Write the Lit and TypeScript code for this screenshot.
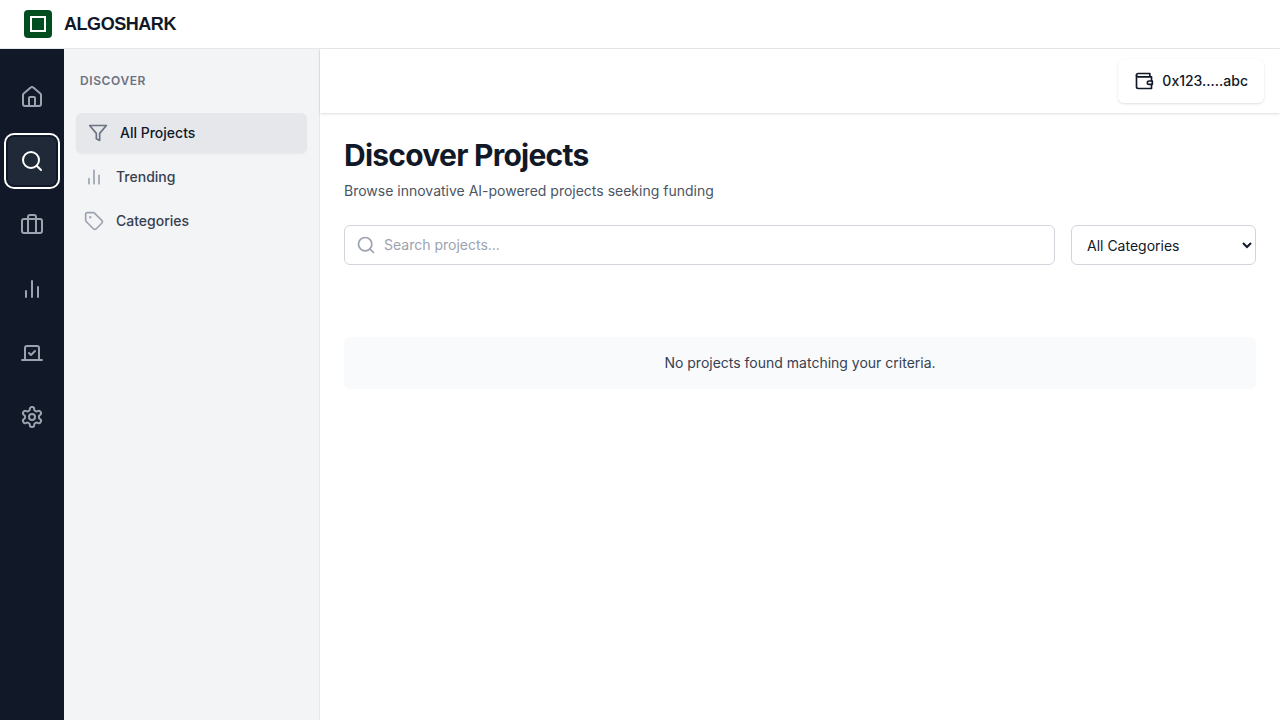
import { LitElement, html, css, svg } from "lit";
import { customElement, state } from "lit/decorators.js";

const icons = {
  home: svg`<path d="M15 21v-8a1 1 0 0 0-1-1h-4a1 1 0 0 0-1 1v8"/><path d="M3 10a2 2 0 0 1 .709-1.528l7-5.999a2 2 0 0 1 2.582 0l7 5.999A2 2 0 0 1 21 10v9a2 2 0 0 1-2 2H5a2 2 0 0 1-2-2z"/>`,
  search: svg`<circle cx="11" cy="11" r="8"/><path d="m21 21-4.3-4.3"/>`,
  portfolio: svg`<path d="M16 20V4a2 2 0 0 0-2-2h-4a2 2 0 0 0-2 2v16"/><rect width="20" height="14" x="2" y="6" rx="2"/>`,
  chart: svg`<path d="M18 20V10M12 20V4M6 20v-6"/>`,
  vote: svg`<path d="m9 12 2 2 4-4"/><path d="M5 7c0-1.1.9-2 2-2h10a2 2 0 0 1 2 2v12H5V7Z"/><path d="M22 19H2"/>`,
  settings: svg`<path d="M12.22 2h-.44a2 2 0 0 0-2 2v.18a2 2 0 0 1-1 1.73l-.43.25a2 2 0 0 1-2 0l-.15-.08a2 2 0 0 0-2.73.73l-.22.38a2 2 0 0 0 .73 2.73l.15.1a2 2 0 0 1 1 1.72v.51a2 2 0 0 1-1 1.74l-.15.09a2 2 0 0 0-.73 2.73l.22.38a2 2 0 0 0 2.73.73l.15-.08a2 2 0 0 1 2 0l.43.25a2 2 0 0 1 1 1.73V20a2 2 0 0 0 2 2h.44a2 2 0 0 0 2-2v-.18a2 2 0 0 1 1-1.73l.43-.25a2 2 0 0 1 2 0l.15.08a2 2 0 0 0 2.73-.73l.22-.39a2 2 0 0 0-.73-2.73l-.15-.08a2 2 0 0 1-1-1.74v-.5a2 2 0 0 1 1-1.74l.15-.09a2 2 0 0 0 .73-2.73l-.22-.38a2 2 0 0 0-2.73-.73l-.15.08a2 2 0 0 1-2 0l-.43-.25a2 2 0 0 1-1-1.73V4a2 2 0 0 0-2-2z"/><circle cx="12" cy="12" r="3"/>`,
  filter: svg`<path d="M22 3H2l8 9.46V19l4 2v-8.54L22 3z"/>`,
  tag: svg`<path d="M12.586 2.586A2 2 0 0 0 11.172 2H4a2 2 0 0 0-2 2v7.172a2 2 0 0 0 .586 1.414l8.704 8.704a2.426 2.426 0 0 0 3.42 0l6.58-6.58a2.426 2.426 0 0 0 0-3.42z"/><circle cx="7.5" cy="7.5" r=".5" fill="currentColor"/>`,
  wallet: svg`<path d="M21 12V7H5a2 2 0 0 1 0-4h14v4"/><path d="M3 5v14a2 2 0 0 0 2 2h16v-5"/><path d="M18 12a2 2 0 0 0 0 4h4v-4Z"/>`,
};

type IconName = keyof typeof icons;

const icon = (name: IconName) => html`<svg class="icon" viewBox="0 0 24 24" aria-hidden="true">${icons[name]}</svg>`;

const sections: { label: string; icon: IconName }[] = [
  { label: "Home", icon: "home" },
  { label: "Discover", icon: "search" },
  { label: "Portfolio", icon: "portfolio" },
  { label: "Analytics", icon: "chart" },
  { label: "Governance", icon: "vote" },
  { label: "Settings", icon: "settings" },
];

const views: { label: string; icon: IconName }[] = [
  { label: "All Projects", icon: "filter" },
  { label: "Trending", icon: "chart" },
  { label: "Categories", icon: "tag" },
];

@customElement("app-root")
export class AppRoot extends LitElement {
  @state() private section = "Discover";
  @state() private view = "All Projects";

  static styles = css`
    :host {
      display: flex;
      flex-direction: column;
      min-height: 100vh;
      background: #fff;
      color: #111827;
      font: 14px/20px Inter, sans-serif;
    }
    * { box-sizing: border-box; }
    h1, h2, p { margin: 0; }
    button, input, select { font: inherit; color: inherit; }
    button { border: 0; background: none; cursor: pointer; }
    .icon {
      display: block;
      flex: none;
      width: 20px;
      height: 20px;
      fill: none;
      stroke: currentColor;
      stroke-width: 2;
      stroke-linecap: round;
      stroke-linejoin: round;
    }
    .brand-bar {
      display: flex;
      align-items: center;
      gap: 12px;
      padding: 10px 24px;
      border-bottom: 1px solid #e5e7eb;
    }
    .logo {
      display: grid;
      place-items: center;
      width: 28px;
      height: 28px;
      border-radius: 4px;
      background: #004d20;
    }
    .logo-mark { width: 16px; height: 16px; border: 2px solid #fff; }
    .brand {
      font: 700 18px/28px "Liberation Sans", sans-serif;
      letter-spacing: -0.025em;
    }
    .body { display: flex; flex: 1; }
    .rail {
      display: flex;
      flex-direction: column;
      align-items: center;
      gap: 16px;
      width: 64px;
      padding: 24px 0;
      background: #111827;
    }
    .rail-item {
      display: grid;
      place-items: center;
      width: 48px;
      height: 48px;
      padding: 0;
      border-radius: 6px;
      color: #9ca3af;
    }
    .rail-item .icon { width: 24px; height: 24px; }
    .rail-item.active {
      background: #1f2937;
      color: #fff;
      box-shadow: 0 0 0 2px #111827, 0 0 0 4px #fff;
    }
    .side {
      width: 256px;
      padding: 22px 12px;
      border-right: 1px solid #e5e7eb;
      background: #f3f4f6;
    }
    .side-title {
      padding: 0 4px;
      font-size: 12px;
      font-weight: 600;
      line-height: 20px;
      letter-spacing: 0.05em;
      text-transform: uppercase;
      color: #6b7280;
    }
    .side-list { display: flex; flex-direction: column; gap: 4px; padding-top: 22px; }
    .side-item {
      display: flex;
      align-items: center;
      gap: 12px;
      padding: 10px 8px;
      border-radius: 6px;
      font-weight: 500;
      color: #374151;
    }
    .side-item .icon { color: #9ca3af; }
    .side-item.active {
      padding: 10px 12px;
      background: #e5e7eb;
      color: #111827;
      box-shadow: 0 1px 2px rgb(0 0 0 / 5%);
    }
    .side-item.active .icon { color: #6b7280; }
    main { flex: 1; min-width: 0; }
    .top {
      display: flex;
      justify-content: flex-end;
      padding: 10px 16px;
      box-shadow: 0 1px 3px rgb(0 0 0 / 10%), 0 1px 2px -1px rgb(0 0 0 / 10%);
    }
    .wallet {
      display: flex;
      align-items: center;
      gap: 8px;
      padding: 12px 16px;
      border-radius: 6px;
      font-weight: 500;
      background: #fff;
      box-shadow: 0 1px 3px rgb(0 0 0 / 10%), 0 1px 2px -1px rgb(0 0 0 / 10%);
    }
    .content { padding: 24px; }
    h1 { font-size: 30px; font-weight: 700; line-height: 36px; letter-spacing: -0.025em; }
    .lead { padding-top: 8px; color: #4b5563; }
    .filters { display: flex; gap: 16px; padding-top: 24px; }
    .search {
      display: flex;
      flex: 1;
      align-items: center;
      gap: 8px;
      height: 40px;
      padding: 0 11px;
      border: 1px solid #d1d5db;
      border-radius: 6px;
      color: #9ca3af;
    }
    .search-input {
      flex: 1;
      min-width: 0;
      padding: 0;
      border: 0;
      outline: 0;
      background: none;
      color: #111827;
    }
    .search-input::placeholder { color: #9ca3af; }
    .category {
      width: 185px;
      height: 40px;
      padding: 0 0 0 11px;
      border: 1px solid #d1d5db;
      border-radius: 6px;
      background: #fff;
    }
    .empty {
      margin-top: 72px;
      padding: 16px;
      border-radius: 6px;
      background: #f9fafb;
      color: #374151;
      text-align: center;
    }
  `;

  render() {
    return html`
      <header class="brand-bar">
        <div class="logo"><div class="logo-mark"></div></div>
        <div class="brand">ALGOSHARK</div>
      </header>
      <div class="body">
        <nav class="rail" aria-label="Sections">
          ${sections.map((s) => html`<button
            class="rail-item ${this.section === s.label ? "active" : ""}"
            aria-label=${s.label}
            @click=${() => (this.section = s.label)}
          >${icon(s.icon)}</button>`)}
        </nav>
        <aside class="side">
          <h2 class="side-title">Discover</h2>
          <nav class="side-list" aria-label="Discover">
            ${views.map((v) => html`<button
              class="side-item ${this.view === v.label ? "active" : ""}"
              @click=${() => (this.view = v.label)}
            >${icon(v.icon)}<span>${v.label}</span></button>`)}
          </nav>
        </aside>
        <main>
          <div class="top">
            <button class="wallet">${icon("wallet")}<span>0x123.....abc</span></button>
          </div>
          <div class="content">
            <h1>Discover Projects</h1>
            <p class="lead">Browse innovative AI-powered projects seeking funding</p>
            <div class="filters">
              <label class="search">
                ${icon("search")}
                <input class="search-input" type="text" aria-label="Search projects" placeholder="Search projects..." />
              </label>
              <select class="category" aria-label="Category">
                <option>All Categories</option>
              </select>
            </div>
            <p class="empty">No projects found matching your criteria.</p>
          </div>
        </main>
      </div>
    `;
  }
}
